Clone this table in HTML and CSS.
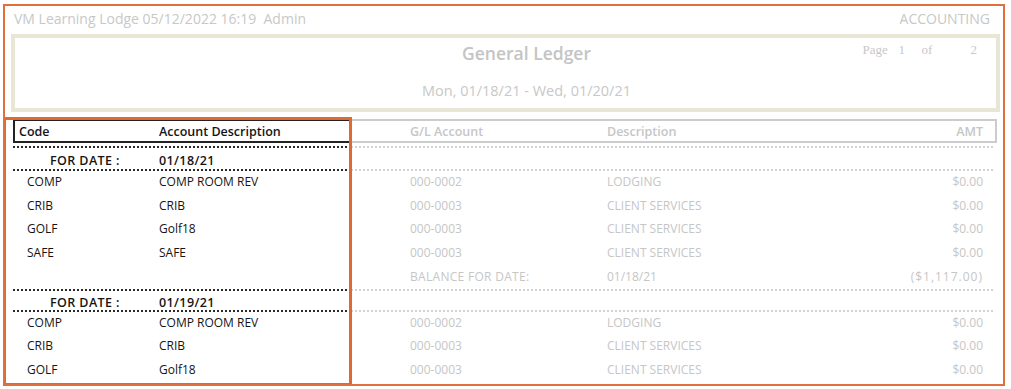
FILE: index.html
```html
<!DOCTYPE html>
<html>
<head>
<meta charset="utf-8">
<link rel="stylesheet" href="styles.css">
</head>
<body>
<div class="frame">
  <div class="topbar">
    <span>VM Learning Lodge 05/12/2022 16:19&nbsp; Admin</span>
    <span>ACCOUNTING</span>
  </div>
  <div class="titlebox">
    <div class="titlegrid">
      <div class="title">General Ledger</div>
      <div class="pageinfo"><span class="p1">Page</span><span class="p2">1</span><span class="p3">of</span><span class="p4">2</span></div>
    </div>
    <div class="daterange">Mon, 01/18/21 - Wed, 01/20/21</div>
  </div>

  <div class="ledger">
    <div class="row head">
      <div class="c c1 dk">Code</div>
      <div class="c c2 dk">Account Description</div>
      <div class="c c3">G/L Account</div>
      <div class="c c4">Description</div>
      <div class="c c5">AMT</div>
    </div>
    <div class="sep first"><i class="sd"></i><i class="sl"></i></div>
    <div class="row fordate fd1">
      <div class="c c1 dk">FOR DATE :</div>
      <div class="c c2 dk">01/18/21</div>
      <div class="c c3"></div><div class="c c4"></div><div class="c c5"></div>
    </div>
    <div class="sep"><i class="sd"></i><i class="sl"></i></div>
    <div class="row data">
      <div class="c c1 dk">COMP</div><div class="c c2 dk">COMP ROOM REV</div>
      <div class="c c3">000-0002</div><div class="c c4">LODGING</div><div class="c c5">$0.00</div>
    </div>
    <div class="row data">
      <div class="c c1 dk">CRIB</div><div class="c c2 dk">CRIB</div>
      <div class="c c3">000-0003</div><div class="c c4">CLIENT SERVICES</div><div class="c c5">$0.00</div>
    </div>
    <div class="row data">
      <div class="c c1 dk">GOLF</div><div class="c c2 dk">Golf18</div>
      <div class="c c3">000-0003</div><div class="c c4">CLIENT SERVICES</div><div class="c c5">$0.00</div>
    </div>
    <div class="row data">
      <div class="c c1 dk">SAFE</div><div class="c c2 dk">SAFE</div>
      <div class="c c3">000-0003</div><div class="c c4">CLIENT SERVICES</div><div class="c c5">$0.00</div>
    </div>
    <div class="row data balance">
      <div class="c c1 dk"></div><div class="c c2 dk"></div>
      <div class="c c3">BALANCE FOR DATE:</div><div class="c c4">01/18/21</div><div class="c c5 total">($1,117.00)</div>
    </div>
    <div class="sep"><i class="sd"></i><i class="sl"></i></div>
    <div class="row fordate fd2">
      <div class="c c1 dk">FOR DATE :</div>
      <div class="c c2 dk">01/19/21</div>
      <div class="c c3"></div><div class="c c4"></div><div class="c c5"></div>
    </div>
    <div class="sep"><i class="sd"></i><i class="sl"></i></div>
    <div class="row data">
      <div class="c c1 dk">COMP</div><div class="c c2 dk">COMP ROOM REV</div>
      <div class="c c3">000-0002</div><div class="c c4">LODGING</div><div class="c c5">$0.00</div>
    </div>
    <div class="row data">
      <div class="c c1 dk">CRIB</div><div class="c c2 dk">CRIB</div>
      <div class="c c3">000-0003</div><div class="c c4">CLIENT SERVICES</div><div class="c c5">$0.00</div>
    </div>
    <div class="row data">
      <div class="c c1 dk">GOLF</div><div class="c c2 dk">Golf18</div>
      <div class="c c3">000-0003</div><div class="c c4">CLIENT SERVICES</div><div class="c c5">$0.00</div>
    </div>
  </div>

  <div class="highlight"></div>
</div>
</body>
</html>
```

FILE: styles.css
```css
html, body {
  margin: 0;
  padding: 0;
  background: #ffffff;
}
body {
  font-family: "Open Sans", "Liberation Sans", sans-serif;
  font-size: 12px;
  color: #c6c6c6;
}
.frame {
  position: relative;
  box-sizing: border-box;
  margin: 4px 0 0 3px;
  width: 1002px;
  height: 382px;
  border: 2px solid #e2703c;
  overflow: hidden;
}
.topbar {
  display: flex;
  justify-content: space-between;
  padding: 4px 13px 6px 9px;
  line-height: 18px;
  font-size: 14px;
  color: #c8c8c8;
}
.titlebox {
  margin: 0 3px 0 6px;
  border: 4px solid #e8e7d6;
  padding: 4px 0 8px 0;
}
.titlegrid {
  display: grid;
  grid-template-columns: 1fr;
}
.title {
  grid-area: 1 / 1;
  text-align: center;
  padding-left: 42px;
  font-size: 17.5px;
  font-weight: 600;
  line-height: 22px;
  color: #c4c4c4;
}
.pageinfo {
  grid-area: 1 / 1;
  justify-self: end;
  align-self: start;
  display: flex;
  padding-right: 19px;
  font-family: "Liberation Serif", serif;
  font-size: 13px;
  line-height: 16px;
  color: #c8c8c8;
}
.p1 { width: 36px; }
.p2 { width: 23px; }
.p3 { width: 49px; }
.daterange {
  margin-top: 18px;
  text-align: center;
  padding-left: 42px;
  font-size: 14.5px;
  line-height: 18px;
  color: #c8c8c8;
}
.ledger {
  margin: 7px 6px 0 8px;
}
.row {
  display: grid;
  grid-template-columns: 140px 198px 250px 1fr 120px;
}
.c {
  white-space: nowrap;
}
.dk { color: #151515; }
.c1 { padding-left: 6px; }
.c2 { padding-left: 6px; }
.c3 { padding-left: 59px; }
.c4 { padding-left: 6px; }
.c5 { text-align: right; padding-right: 14px; }

.head .c {
  font-weight: 600;
  font-size: 12.5px;
  padding-top: 2px;
  line-height: 18px;
  border-top: 2px solid #cccccc;
  border-bottom: 2px solid #cccccc;
}
.head .c.dk {
  border-top-color: #222222;
  border-bottom-color: #222222;
}
.head .c1 { border-left: 2px solid #222222; padding-left: 4px; }
.head .c5 { border-right: 2px solid #cccccc; padding-right: 12px; }

.sep {
  display: flex;
  height: 2px;
}
.sep.first { margin-top: 3px; }
.sep i { display: block; height: 2px; }
.sd {
  width: 338px;
  background-image: repeating-linear-gradient(to right, #2a2a2a 0 2px, transparent 2px 4px);
}
.sl {
  flex: 1;
  margin-right: 2px;
  background-image: repeating-linear-gradient(to right, #d2d2d2 0 2px, transparent 2px 4px);
}

.fordate .c1 { padding-left: 37px; }
.fordate .c { font-weight: 600; font-size: 12.5px; letter-spacing: 0.4px; }
.fd1 .c { padding-top: 5px; line-height: 16px; height: 21px; box-sizing: border-box; }
.fd2 .c { padding-top: 4px; line-height: 16px; height: 19px; box-sizing: border-box; }

.data .c {
  line-height: 21px;
  height: 23.5px;
}
.data .c1 { padding-left: 14px; }
.balance .c { line-height: 23px; }
.balance .c3 { letter-spacing: 0.3px; }
.total { letter-spacing: 1px; }

.highlight {
  position: absolute;
  left: -2px;
  top: 111px;
  width: 349px;
  height: 269px;
  box-sizing: border-box;
  border: 3px solid #e0692f;
  pointer-events: none;
}
```
